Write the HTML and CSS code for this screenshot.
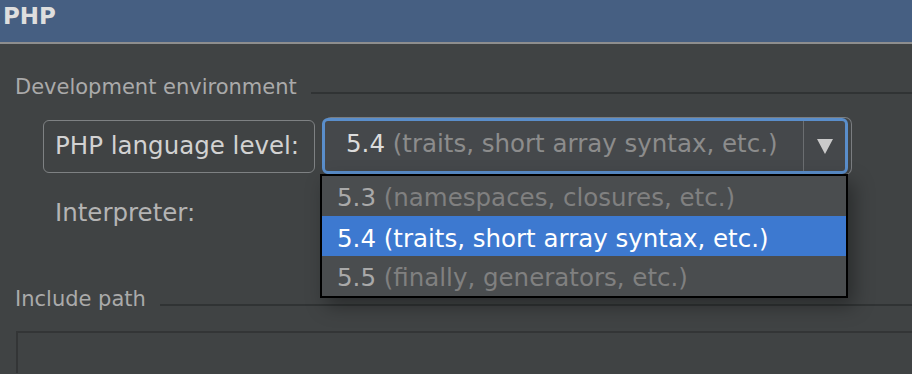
FILE: index.html
```html
<!DOCTYPE html>
<html lang="en">
<head>
  <meta charset="UTF-8" />
  <title>PHP</title>
  <link rel="stylesheet" href="styles.css">
</head>
<body>
  <div class="title-bar">PHP</div>

  <div class="panel">
    <div class="section">Development environment</div>

    <div class="level-row">
      <div class="level-label">PHP language level:</div>
      <div class="combo">
        <div class="combo-value"><span class="ver">5.4</span> <span class="desc">(traits, short array syntax, etc.)</span></div>
        <div class="combo-arrow"><span class="triangle"></span></div>

        <ul class="popup">
          <li><span class="ver">5.3</span> <span class="desc">(namespaces, closures, etc.)</span></li>
          <li class="selected"><span class="ver">5.4</span> <span class="desc">(traits, short array syntax, etc.)</span></li>
          <li><span class="ver">5.5</span> <span class="desc">(finally, generators, etc.)</span></li>
        </ul>
      </div>
    </div>

    <div class="interp-row">Interpreter:</div>

    <div class="section include">Include path</div>
    <div class="path-box"></div>
  </div>
</body>
</html>
```

FILE: styles.css
```css
html, body {
  overflow: hidden;
}
body {
  margin: 0;
  font-family: "DejaVu Sans", Verdana, sans-serif;
  background-color: #404344;
  color: #aaa;
}
.title-bar {
  box-sizing: border-box;
  height: 44px;
  padding: 1px 3px 0;
  background: #465f82;
  border-bottom: 2px solid #8e8e8e;
  color: #dedede;
  font-size: 23px;
  font-weight: bold;
  line-height: 30px;
}
.panel {
  padding-left: 15px;
}
.section {
  display: flex;
  align-items: baseline;
  margin-top: 31px;
  font-size: 21px;
  line-height: 24px;
  color: #aaa;
}
.section::after {
  content: "";
  flex: 1;
  height: 0;
  margin-left: 14px;
  margin-bottom: -2px;
  border-bottom: 2px solid #303334;
}
.level-row {
  display: flex;
  align-items: center;
  margin-top: 19px;
  margin-left: 28px;
  font-size: 24.5px;
  line-height: 28px;
}
.level-label {
  box-sizing: border-box;
  display: flex;
  align-items: center;
  width: 272px;
  height: 53px;
  padding-left: 11px;
  border: 1px solid #7e8183;
  border-radius: 6px;
  color: #d2d2d2;
}
.combo {
  position: relative;
  box-sizing: border-box;
  display: flex;
  width: 526px;
  height: 56px;
  margin-left: 7px;
  border: 3px solid #5a8ecb;
  border-radius: 6px;
  background: #45484b;
  box-shadow: 3px 0 0 0 #404344, 3px 0 0 1px #7a7d80;
}
.combo-value {
  flex: 1;
  padding: 9px 0 0 21px;
  white-space: pre;
}
.ver {
  color: #dcdcdc;
}
.desc {
  color: #8c8c8c;
}
.combo-arrow {
  display: flex;
  align-items: center;
  justify-content: center;
  width: 41px;
  border-left: 1px solid #6b6e71;
}
.triangle {
  width: 0;
  height: 0;
  border-left: 8px solid transparent;
  border-right: 8px solid transparent;
  border-top: 15px solid #cacaca;
}
.popup {
  position: absolute;
  top: 53px;
  left: -5px;
  width: 528px;
  box-sizing: border-box;
  margin: 0;
  padding: 0;
  list-style: none;
  border: 2px solid #000;
  background: #4a4d4f;
  box-shadow: 6px 8px 18px rgba(0, 0, 0, 0.35);
}
.popup li {
  box-sizing: border-box;
  height: 40px;
  padding: 8px 0 0 15px;
  white-space: pre;
}
.popup .ver {
  color: #a9a9a9;
}
.popup .desc {
  color: #808080;
}
.popup li.selected {
  padding-top: 9px;
  background: #3d79d0;
}
.popup li.selected .ver,
.popup li.selected .desc {
  color: #fff;
}
.interp-row {
  margin-top: 25px;
  margin-left: 40px;
  font-size: 24.5px;
  line-height: 28px;
  color: #b4b4b4;
}
.section.include {
  margin-top: 60px;
}
.path-box {
  height: 40px;
  margin-top: 20px;
  margin-right: -4px;
  margin-left: 1px;
  border: 2px solid #333536;
  border-bottom: none;
}
```
